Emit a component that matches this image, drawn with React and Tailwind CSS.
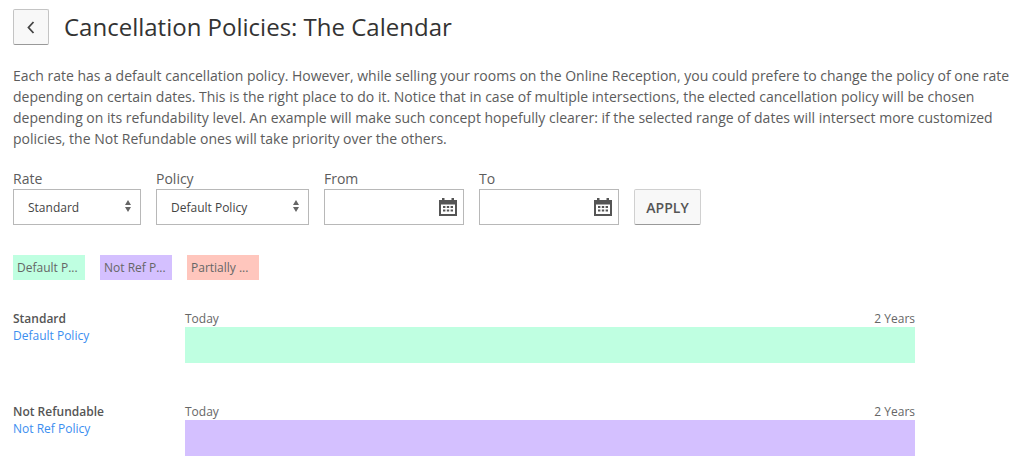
import React from "react";

const Cal = () => (
  <svg width="18" height="18" viewBox="0 0 18 18" className="absolute right-[6px] top-[8px]">
    <path fill="#555" fillRule="evenodd" d="M3 0h2.5v2h7V0H15v2h3v16H0V2h3V0zM2 6.5V16h14V6.5H2z" />
    <g fill="#555">
      <rect x="4" y="8" width="2.4" height="2" /><rect x="7.8" y="8" width="2.4" height="2" /><rect x="11.6" y="8" width="2.4" height="2" />
      <rect x="4" y="11.5" width="2.4" height="2" /><rect x="7.8" y="11.5" width="2.4" height="2" /><rect x="11.6" y="11.5" width="2.4" height="2" />
    </g>
  </svg>
);

const Arrows = () => (
  <svg width="6" height="12" viewBox="0 0 6 12" className="absolute right-[9px] top-[10px] pointer-events-none">
    <path fill="#666" d="M3 0L6 5H0zM3 12L0 7h6z" />
  </svg>
);

const Field = ({ label, width, children }) => (
  <div className="flex flex-col" style={{ width }}>
    <span className="text-[14px] leading-[20px] h-[20px] text-[#5c5c5c]">{label}</span>
    <div className="relative h-[36px] border border-[#b8b8b8] bg-white">{children}</div>
  </div>
);

const Sel = ({ v }) => (
  <>
    <div className="pl-[14px] text-[12px] leading-[36px] text-[#444]">{v}</div>
    <Arrows />
  </>
);

const Row = ({ name, policy, color, cls }) => (
  <div className={`flex ${cls}`}>
    <div className="w-[172px] text-[12px] leading-[17px] pt-[1px]">
      <div className="font-semibold text-[#555]">{name}</div>
      <div className="text-[#3b8ef0]">{policy}</div>
    </div>
    <div className="w-[730px]">
      <div className="flex h-[18px] justify-between text-[12px] leading-[20px] text-[#666]">
        <span>Today</span>
        <span>2 Years</span>
      </div>
      <div className={`h-[36px] ${color}`} />
    </div>
  </div>
);

export default function App() {
  return (
    <div className="h-[465px] overflow-hidden bg-white pl-[13px] pt-[9px] font-['Open_Sans',sans-serif]">
      <div className="flex items-center gap-[15px]">
        <button className="flex h-[36px] w-[36px] items-center justify-center rounded-[2px] border border-[#c4c4c4] border-b-[#999] bg-[#f8f8f8]">
          <svg width="8" height="13" viewBox="0 0 8 13">
            <path d="M6.5 1L1.5 6.5L6.5 12" fill="none" stroke="#444" strokeWidth="1.8" />
          </svg>
        </button>
        <h1 className="text-[24px] leading-[36px] text-[#333]">Cancellation Policies: The Calendar</h1>
      </div>

      <p className="mt-[20px] w-[1000px] text-[14px] leading-[21px] text-[#5c5c5c]">
        Each rate has a default cancellation policy. However, while selling your rooms on the Online Reception, you could prefere to change the policy of one rate
        <br />
        depending on certain dates. This is the right place to do it. Notice that in case of multiple intersections, the elected cancellation policy will be chosen
        <br />
        depending on its refundability level. An example will make such concept hopefully clearer: if the selected range of dates will intersect more customized
        <br />
        policies, the Not Refundable ones will take priority over the others.
      </p>

      <div className="mt-[20px] flex items-end gap-[15px]">
        <Field label="Rate" width={128}><Sel v="Standard" /></Field>
        <Field label="Policy" width={153}><Sel v="Default Policy" /></Field>
        <Field label="From" width={140}><Cal /></Field>
        <Field label="To" width={140}><Cal /></Field>
        <button className="h-[36px] w-[67px] rounded-[2px] border border-[#d0d0d0] border-b-[#999] bg-[#f8f8f8] text-[14px] font-semibold text-[#555]">APPLY</button>
      </div>

      <div className="mt-[30px] flex gap-[15px] text-[12px] leading-[25px] text-[#666]">
        <div className="h-[25px] w-[72px] bg-[#bfffe1] pl-[4px]">Default P...</div>
        <div className="h-[25px] w-[72px] bg-[#d4c0ff] pl-[4px]">Not Ref P...</div>
        <div className="h-[25px] w-[72px] bg-[#ffc6bd] pl-[4px]">Partially ...</div>
      </div>

      <Row name="Standard" policy="Default Policy" color="bg-[#bfffe1]" cls="mt-[29px]" />
      <Row name="Not Refundable" policy="Not Ref Policy" color="bg-[#d4c0ff]" cls="mt-[39px]" />
    </div>
  );
}
